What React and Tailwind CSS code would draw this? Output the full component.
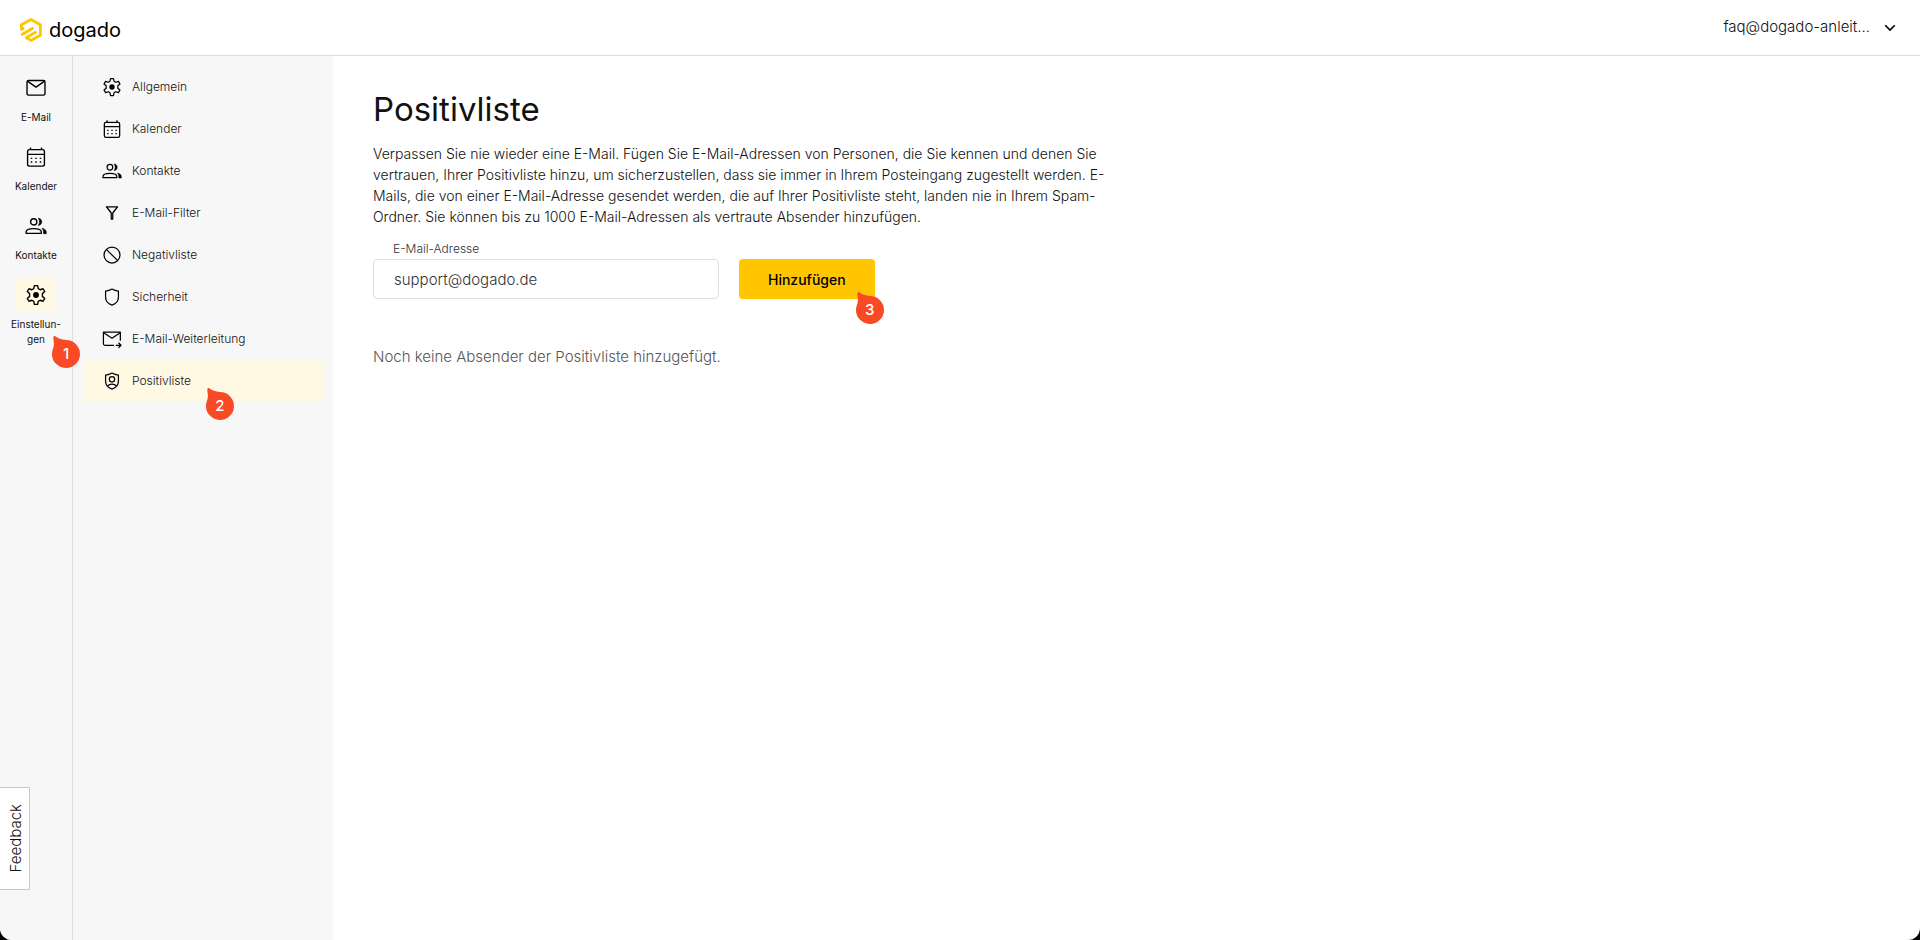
import { useState } from 'react';

const railItems = [
  { label: 'E-Mail', icon: MailIcon },
  { label: 'Kalender', icon: CalendarIcon },
  { label: 'Kontakte', icon: PeopleIcon },
  { label: 'Einstellun-gen', icon: GearIcon, active: true, step: '1' },
];

const menuItems = [
  { label: 'Allgemein', icon: GearIcon },
  { label: 'Kalender', icon: CalendarIcon },
  { label: 'Kontakte', icon: PeopleIcon },
  { label: 'E-Mail-Filter', icon: FilterIcon },
  { label: 'Negativliste', icon: BlockIcon },
  { label: 'Sicherheit', icon: ShieldIcon },
  { label: 'E-Mail-Weiterleitung', icon: ForwardIcon },
  { label: 'Positivliste', icon: ShieldUserIcon, active: true, step: '2' },
];

export default function App() {
  const [email, setEmail] = useState('support@dogado.de');

  return (
    <div className="bg-black">
      <div className="relative flex min-h-screen flex-col overflow-hidden rounded-b-xl bg-white font-['Inter',sans-serif] text-[#111]">
        <header className="flex h-14 items-center justify-between border-b border-[#dedede] pr-6 pl-5">
          <a href="#" className="flex items-center gap-[7px] pt-1">
            <LogoMark />
            <span className="text-[20px] leading-6 text-black">dogado</span>
          </a>
          <button type="button" className="flex items-center gap-[14px] text-[15px] font-light">
            faq@dogado-anleit...
            <ChevronIcon />
          </button>
        </header>

        <div className="flex flex-1">
          {/* App rail */}
          <nav className="flex w-[73px] shrink-0 flex-col items-center gap-[15px] border-r border-[#dedede] bg-[#f7f7f7] pt-[15px]">
            {railItems.map((item) => (
              <RailItem key={item.label} {...item} />
            ))}
          </nav>

          {/* Settings menu */}
          <nav className="flex w-[260px] shrink-0 flex-col bg-[#f7f7f7] p-[10px]">
            {menuItems.map((item) => (
              <MenuItem key={item.label} {...item} />
            ))}
          </nav>

          <main className="flex-1 px-10 pt-[33px]">
            <h1 className="text-[33px] leading-10">Positivliste</h1>
            <p className="mt-[14px] max-w-[740px] text-[14px] leading-[21px] font-light">
              Verpassen Sie nie wieder eine E-Mail. Fügen Sie E-Mail-Adressen von Personen, die Sie kennen und denen Sie
              vertrauen, Ihrer Positivliste hinzu, um sicherzustellen, dass sie immer in Ihrem Posteingang zugestellt
              werden. E-Mails, die von einer E-Mail-Adresse gesendet werden, die auf Ihrer Positivliste steht, landen
              nie in Ihrem Spam-Ordner. Sie können bis zu 1000 E-Mail-Adressen als vertraute Absender hinzufügen.
            </p>

            <form className="mt-3 flex items-end gap-5" onSubmit={(e) => e.preventDefault()}>
              <div className="flex w-[346px] flex-col">
                <label htmlFor="email" className="px-5 text-[12px] leading-5 font-light text-[#333]">
                  E-Mail-Adresse
                </label>
                <input
                  id="email"
                  type="text"
                  value={email}
                  onChange={(e) => setEmail(e.target.value)}
                  className="h-10 rounded border border-[#dedede] px-5 text-[15px] font-light text-[#333] outline-none"
                />
              </div>
              <div className="relative">
                <button type="submit" className="h-10 rounded bg-[#ffc600] px-[29px] text-[14px] font-medium text-black">
                  Hinzufügen
                </button>
                <Marker className="-right-[9px] -bottom-[25px]">3</Marker>
              </div>
            </form>

            <p className="mt-[46px] text-[15px] leading-6 font-light text-[#555]">
              Noch keine Absender der Positivliste hinzugefügt.
            </p>
          </main>
        </div>

        <button
          type="button"
          className="absolute bottom-[50px] left-0 h-[103px] border border-l-0 border-[#c8c8c8] bg-white pr-[3px] pl-[5px] text-[15px] leading-[21px] font-light"
        >
          <span className="block rotate-180 [writing-mode:vertical-rl]">Feedback</span>
        </button>
      </div>
    </div>
  );
}

function RailItem({ label, icon: Icon, active, step }) {
  return (
    <a href="#" className="relative flex w-[60px] flex-col items-center gap-[5px]">
      <span className={active ? 'grid h-[34px] w-10 place-items-center rounded-md bg-[#fff8e3]' : 'grid h-[34px] w-10 place-items-center'}>
        <Icon size={22} />
      </span>
      <span className="text-center text-[10px] leading-[15px] font-normal">{label}</span>
      {step && <Marker className="-right-[14px] -bottom-[21px]">{step}</Marker>}
    </a>
  );
}

function MenuItem({ label, icon: Icon, active, step }) {
  return (
    <a
      href="#"
      className={
        active
          ? 'flex h-[42px] items-center gap-[10px] rounded bg-[#fff8e3] px-[19px] text-[12px] font-light'
          : 'flex h-[42px] items-center gap-[10px] rounded px-[19px] text-[12px] font-light'
      }
    >
      <Icon size={20} />
      <span className="relative">
        {label}
        {step && <Marker className="-right-[43px] -bottom-[30px]">{step}</Marker>}
      </span>
    </a>
  );
}

/* Numbered step marker with the tip in its upper left corner */
function Marker({ className, children }) {
  return (
    <span className={`absolute z-10 h-8 w-7 ${className}`}>
      <svg viewBox="0 0 28 32" className="absolute inset-0 h-full w-full" fill="#f74a25" aria-hidden="true">
        <path d="M1.6.5C2 0 2.600 0 3.200.3 6 2.500 9.500 3.800 14 4A14 14 0 1 1 0 17.500C.1 13.500 2 12 1.900 8 1.900 5 .9 3 1.600.5Z" />
      </svg>
      <span className="absolute inset-x-0 bottom-0 grid h-7 place-items-center text-[15px] font-medium text-white">
        {children}
      </span>
    </span>
  );
}

function LogoMark() {
  return (
    <svg width="22" height="24" viewBox="0 0 22 24" fill="none" stroke="#ffc600" strokeWidth="2.800" strokeLinejoin="round" aria-hidden="true">
      <path d="M1.400 11.500V6.800L11 1.600 20.400 6.800V17.200L11 22.400 6.200 19.700 16.500 13.600" />
      <path d="M.7 12 4.200 9.900M1.200 17 13.500 9.700" />
    </svg>
  );
}

function ChevronIcon() {
  return (
    <svg width="12" height="8" viewBox="0 0 12 8" fill="none" stroke="#000" strokeWidth="1.600" aria-hidden="true">
      <path d="M1.200 1.200 6 6 10.800 1.200" />
    </svg>
  );
}

function Svg({ size, children }) {
  return (
    <svg
      width={size}
      height={size}
      viewBox="0 0 24 24"
      className="shrink-0"
      fill="none"
      stroke="#000"
      strokeWidth="1.500"
      strokeLinejoin="round"
      aria-hidden="true"
    >
      {children}
    </svg>
  );
}

function MailIcon({ size }) {
  return (
    <Svg size={size}>
      <rect x="2.200" y="3.800" width="19.600" height="16" rx="1.500" />
      <path d="M3 4.800 12 11 21 4.800" />
    </Svg>
  );
}

function CalendarIcon({ size }) {
  return (
    <Svg size={size}>
      <rect x="2.800" y="4" width="18.400" height="18" rx="2" />
      <path d="M2.800 9.200H21.200M6 1.500V4M18 1.500V4" />
      <path d="M6.300 13.500h1.600M11.200 13.500h1.600M16.100 13.500h1.600M6.300 17.500h1.600M11.200 17.500h1.600M16.100 17.500h1.600" />
    </Svg>
  );
}

function PeopleIcon({ size }) {
  return (
    <Svg size={size}>
      <circle cx="9.500" cy="7.500" r="3.400" />
      <path d="M1.200 20V18.500c0-2.500 4.500-3.700 8.300-3.700s8.300 1.200 8.300 3.700V20Z" />
      <path d="M14.500 3.600c5 0 5 7.800 0 7.800 1.800-2.300 1.800-5.500 0-7.800ZM18.500 14.500c3 .7 4.700 2 4.700 4V20.500h-3V18.500c0-1.600-.6-2.900-1.700-4Z" fill="#000" strokeWidth=".6" />
    </Svg>
  );
}

function GearIcon({ size }) {
  return (
    <Svg size={size}>
      <path d="M10.200 1.800h3.600l.6 3.300 2.100 1.200 3.200-1.100 1.800 3.100-2.500 2.200v3l2.500 2.200-1.800 3.100-3.200-1.100-2.100 1.200-.6 3.300h-3.600l-.6-3.300-2.100-1.200-3.200 1.100-1.800-3.100 2.500-2.200v-3L2.500 8.300l1.800-3.100 3.200 1.100 2.100-1.200Z" />
      <circle cx="12" cy="12" r="3.200" fill="#000" stroke="none" />
    </Svg>
  );
}

function FilterIcon({ size }) {
  return (
    <Svg size={size}>
      <path d="M5.300 4.500H18.700L12.900 12V19.300H11.100V12Z" />
    </Svg>
  );
}

function BlockIcon({ size }) {
  return (
    <Svg size={size}>
      <circle cx="12" cy="12" r="9.600" />
      <path d="M5.200 5.200 18.800 18.800" />
    </Svg>
  );
}

function ShieldIcon({ size }) {
  return (
    <Svg size={size}>
      <path d="M12 2.500C14.500 4 17 4.700 19.700 5V12c0 5-3.200 8.300-7.700 9.700-4.500-1.400-7.700-4.700-7.700-9.700V5C7 4.700 9.500 4 12 2.500Z" />
    </Svg>
  );
}

function ForwardIcon({ size }) {
  return (
    <Svg size={size}>
      <path d="M14.500 19.500H3.500a1.800 1.800 0 0 1-1.800-1.800V3.800H22V14" />
      <path d="M2 4.500 12 11 21.800 4.500M16.500 19.500H22.500M19.800 16.500 22.800 19.500 19.800 22.500" />
    </Svg>
  );
}

function ShieldUserIcon({ size }) {
  return (
    <Svg size={size}>
      <path d="M12 2.500C14.500 4 17 4.700 19.700 5V12c0 5-3.200 8.300-7.700 9.700-4.500-1.400-7.700-4.700-7.700-9.700V5C7 4.700 9.500 4 12 2.500Z" />
      <circle cx="12" cy="10" r="3.200" />
      <path d="M6.500 18C8 16.500 10 15.800 12 15.800S16 16.500 17.500 18" />
    </Svg>
  );
}
